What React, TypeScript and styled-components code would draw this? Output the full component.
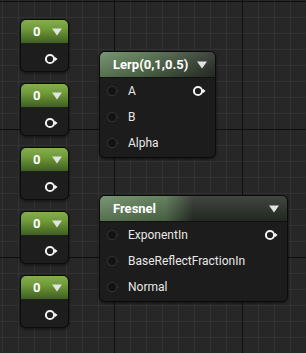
import React from "react";
import styled, { createGlobalStyle } from "styled-components";

const GlobalStyle = createGlobalStyle`
  html, body {
    margin: 0;
    padding: 0;
    background: #272727;
  }
  body {
    font-family: Roboto, "Liberation Sans", sans-serif;
  }
`;

const Canvas = styled.div`
  position: relative;
  width: 306px;
  height: 353px;
  overflow: hidden;
  background-color: #272727;
  background-image:
    linear-gradient(to right, #101010 1px, transparent 1px),
    linear-gradient(to bottom, #101010 1px, transparent 1px),
    linear-gradient(to right, #323232 1px, transparent 1px),
    linear-gradient(to bottom, #323232 1px, transparent 1px);
  background-size: 128px 100%, 100% 128px, 16px 16px, 16px 16px;
  background-position: 114px 0, 0 1px, 2px 0, 0 1px;
`;

const ConstStack = styled.div`
  position: absolute;
  left: 20px;
  top: 19px;
  display: flex;
  flex-direction: column;
  gap: 11px;
`;

const ConstNode = styled.div`
  width: 49px;
  height: 53px;
  box-sizing: border-box;
  border: 1px solid #0b0b0b;
  border-radius: 6px;
  background: #1c1d1c;
  box-shadow: 0 1px 3px rgba(0, 0, 0, 0.6);
  overflow: hidden;
  display: flex;
  flex-direction: column;
`;

const ConstHeader = styled.div`
  height: 23px;
  display: flex;
  align-items: center;
  justify-content: space-between;
  padding: 0 6px 0 12px;
  background: linear-gradient(to bottom, #86ae50 0%, #6f9a38 40%, #3f5f20 100%);
  color: #fff;
  font-weight: 700;
  font-size: 13px;
`;

const ConstBody = styled.div`
  flex: 1;
  display: flex;
  align-items: center;
  justify-content: flex-end;
  padding-right: 9px;
  padding-top: 3px;
`;

const Node = styled.div<{ $x: number; $y: number; $w: number }>`
  position: absolute;
  left: ${(p) => p.$x}px;
  top: ${(p) => p.$y}px;
  width: ${(p) => p.$w}px;
  height: 107px;
  box-sizing: border-box;
  border: 1px solid #0b0b0b;
  border-radius: 6px;
  background: #1b1c1b;
  box-shadow: 0 1px 3px rgba(0, 0, 0, 0.6);
  overflow: hidden;
`;

const Header = styled.div<{ $fade: string }>`
  height: 25px;
  display: flex;
  align-items: center;
  justify-content: space-between;
  padding: 0 8px 0 13px;
  background:
    linear-gradient(to bottom, rgba(255, 255, 255, 0.1), rgba(0, 0, 0, 0.18)),
    linear-gradient(to right, #6a8a62 0%, #55734f 35%, #2b302a ${(p) => p.$fade});
  color: #fff;
  font-weight: 700;
  font-size: 13px;
  border-bottom: 1px solid #101110;
`;

const Rows = styled.div`
  display: flex;
  flex-direction: column;
`;

const Row = styled.div`
  height: 26px;
  display: flex;
  align-items: center;
  padding-left: 6px;
  padding-right: 8px;
  color: #e8e8e8;
  font-size: 12px;
`;

const Label = styled.span`
  margin-left: 7px;
  flex: 1;
`;

const Arrow = () => (
  <svg width="10" height="8" viewBox="0 0 10 8">
    <polygon points="0,0.5 10,0.5 5,7.5" fill="#e2e2e2" />
  </svg>
);

const OutPin = () => (
  <svg width="15" height="12" viewBox="0 0 15 12">
    <circle cx="6" cy="6" r="4.1" fill="none" stroke="#f2f2f2" strokeWidth="2" />
    <polygon points="10.8,3.8 13.6,6 10.8,8.2" fill="#f2f2f2" />
  </svg>
);

const InPin = () => (
  <svg width="15" height="12" viewBox="0 0 15 12">
    <circle cx="6" cy="6" r="4.6" fill="#121212" stroke="#2e2e2e" strokeWidth="1.2" />
    <polygon points="11.2,4.4 13,6 11.2,7.6" fill="#2e2e2e" />
  </svg>
);

type Input = { name: string; out?: boolean };

const GraphNode = ({
  title,
  x,
  y,
  w,
  fade,
  inputs,
}: {
  title: string;
  x: number;
  y: number;
  w: number;
  fade: string;
  inputs: Input[];
}) => (
  <Node $x={x} $y={y} $w={w}>
    <Header $fade={fade}>
      <span>{title}</span>
      <Arrow />
    </Header>
    <Rows>
      {inputs.map((i) => (
        <Row key={i.name}>
          <InPin />
          <Label>{i.name}</Label>
          {i.out && <OutPin />}
        </Row>
      ))}
    </Rows>
  </Node>
);

export default function App() {
  return (
    <>
      <GlobalStyle />
      <Canvas>
        <ConstStack>
          {[0, 1, 2, 3, 4].map((n) => (
            <ConstNode key={n}>
              <ConstHeader>
                <span>0</span>
                <Arrow />
              </ConstHeader>
              <ConstBody>
                <OutPin />
              </ConstBody>
            </ConstNode>
          ))}
        </ConstStack>
        <GraphNode
          title="Lerp(0,1,0.5)"
          x={99}
          y={51}
          w={117}
          fade="100%"
          inputs={[{ name: "A", out: true }, { name: "B" }, { name: "Alpha" }]}
        />
        <GraphNode
          title="Fresnel"
          x={99}
          y={195}
          w={189}
          fade="50%"
          inputs={[
            { name: "ExponentIn", out: true },
            { name: "BaseReflectFractionIn" },
            { name: "Normal" },
          ]}
        />
      </Canvas>
    </>
  );
}
